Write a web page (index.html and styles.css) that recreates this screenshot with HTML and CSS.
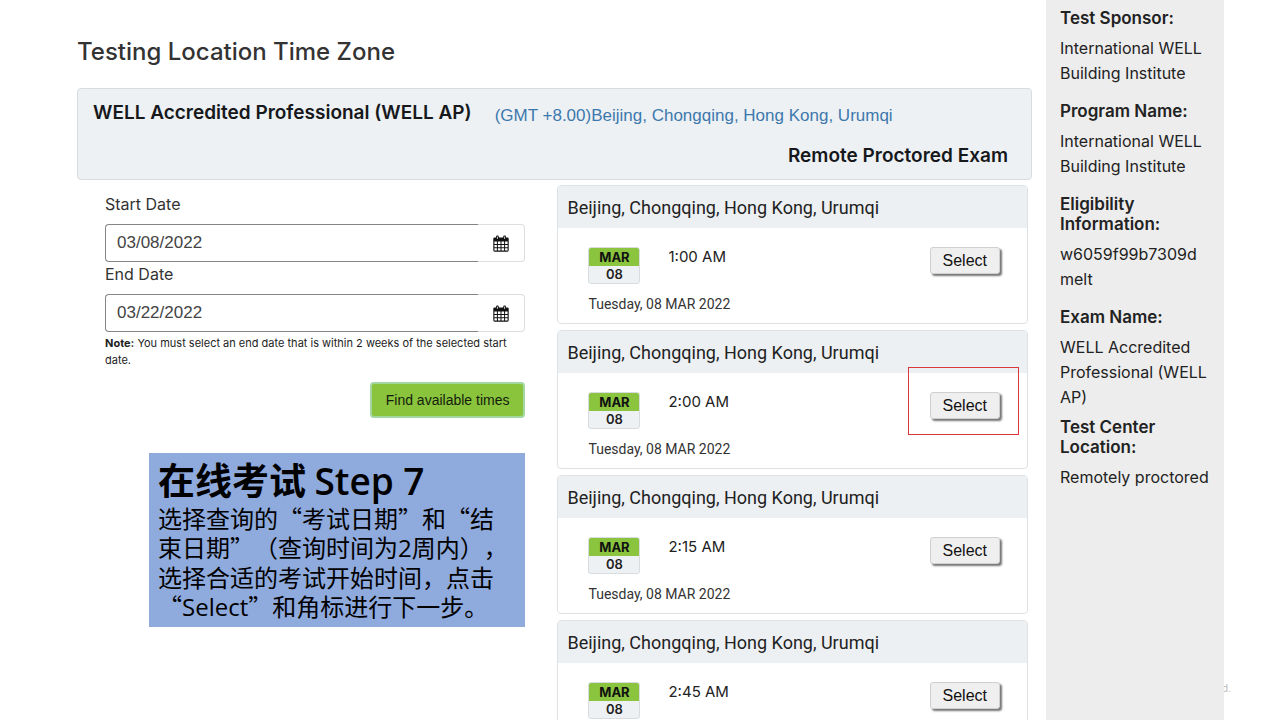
FILE: index.html
```html
<!DOCTYPE html>
<html lang="en">
<head>
<meta charset="utf-8">
<meta name="viewport" content="width=device-width, initial-scale=1">
<title>Testing Location Time Zone</title>
<link rel="stylesheet" href="styles.css">
</head>
<body>
<div class="page">
  <main class="main">
    <h1 class="title">Testing Location Time Zone</h1>
    <section class="exam">
      <div class="exam-row">
        <h2 class="exam-name">WELL Accredited Professional (WELL AP)</h2>
        <a class="zone" href="#">(GMT +8.00)Beijing, Chongqing, Hong Kong, Urumqi</a>
      </div>
      <h2 class="exam-type">Remote Proctored Exam</h2>
    </section>
    <div class="columns">
      <div class="search">
        <form class="form">
          <label class="label" for="start">Start Date</label>
          <div class="date">
            <input class="date-input" id="start" type="text" value="03/08/2022">
            <button class="date-button" type="button" aria-label="Pick start date">
              <svg class="calendar" viewBox="0 0 16 17"><path d="M1.5 2.5h13a1.2 1.2 0 0 1 1.2 1.2v11.6a1.4 1.4 0 0 1-1.4 1.4H1.7a1.4 1.4 0 0 1-1.4-1.4V3.7a1.2 1.2 0 0 1 1.2-1.2z" fill="#111"/><path d="M1.4 6.6h2.5v2.3H1.4zM4.9 6.6h2.6v2.3H4.9zM8.5 6.6h2.6v2.3H8.5zM12.1 6.6h2.5v2.3h-2.5zM1.4 9.9h2.5v2.4H1.4zM4.9 9.9h2.6v2.4H4.9zM8.5 9.9h2.6v2.4H8.5zM12.1 9.9h2.5v2.4h-2.5zM1.4 13.3h2.5v2.3H1.4zM4.9 13.3h2.6v2.3H4.9zM8.5 13.3h2.6v2.3H8.5zM12.1 13.3h2.5v2.3h-2.5z" fill="#fff"/><rect x="3" y=".5" width="2.8" height="4.4" rx="1.2" fill="#111"/><rect x="10.2" y=".5" width="2.8" height="4.4" rx="1.2" fill="#111"/><path d="M4.4 1.6v2.3M11.6 1.6v2.3" stroke="#fff" stroke-width=".8"/></svg>
            </button>
          </div>
          <label class="label label-next" for="end">End Date</label>
          <div class="date">
            <input class="date-input" id="end" type="text" value="03/22/2022">
            <button class="date-button" type="button" aria-label="Pick end date">
              <svg class="calendar" viewBox="0 0 16 17"><path d="M1.5 2.5h13a1.2 1.2 0 0 1 1.2 1.2v11.6a1.4 1.4 0 0 1-1.4 1.4H1.7a1.4 1.4 0 0 1-1.4-1.4V3.7a1.2 1.2 0 0 1 1.2-1.2z" fill="#111"/><path d="M1.4 6.6h2.5v2.3H1.4zM4.9 6.6h2.6v2.3H4.9zM8.5 6.6h2.6v2.3H8.5zM12.1 6.6h2.5v2.3h-2.5zM1.4 9.9h2.5v2.4H1.4zM4.9 9.9h2.6v2.4H4.9zM8.5 9.9h2.6v2.4H8.5zM12.1 9.9h2.5v2.4h-2.5zM1.4 13.3h2.5v2.3H1.4zM4.9 13.3h2.6v2.3H4.9zM8.5 13.3h2.6v2.3H8.5zM12.1 13.3h2.5v2.3h-2.5z" fill="#fff"/><rect x="3" y=".5" width="2.8" height="4.4" rx="1.2" fill="#111"/><rect x="10.2" y=".5" width="2.8" height="4.4" rx="1.2" fill="#111"/><path d="M4.4 1.6v2.3M11.6 1.6v2.3" stroke="#fff" stroke-width=".8"/></svg>
            </button>
          </div>
          <p class="note"><b>Note:</b> You must select an end date that is within 2 weeks of the selected start date.</p>
          <button class="find" type="button">Find available times</button>
        </form>
        <section class="callout" lang="zh-CN">
          <h2 class="callout-title">在线考试 <span class="callout-step">Step 7</span></h2>
          <p class="callout-text">选择查询的“考试日期”和“结<br>束日期”（查询时间为<span class="latin">2</span>周内），<br>选择合适的考试开始时间，点击<br>“<span class="latin">Select</span>”和角标进行下一步。</p>
        </section>
      </div>
      <div class="slots">
        <article class="slot">
          <h3 class="slot-head">Beijing, Chongqing, Hong Kong, Urumqi</h3>
          <div class="slot-body">
            <div class="slot-row">
              <div class="badge"><span class="month">MAR</span><span class="day">08</span></div>
              <span class="time">1:00 AM</span>
              <span class="pick"><button class="select" type="button">Select</button></span>
            </div>
            <p class="slot-date">Tuesday, 08 MAR 2022</p>
          </div>
        </article>
        <article class="slot">
          <h3 class="slot-head">Beijing, Chongqing, Hong Kong, Urumqi</h3>
          <div class="slot-body">
            <div class="slot-row">
              <div class="badge"><span class="month">MAR</span><span class="day">08</span></div>
              <span class="time">2:00 AM</span>
              <span class="pick marked"><button class="select" type="button">Select</button></span>
            </div>
            <p class="slot-date">Tuesday, 08 MAR 2022</p>
          </div>
        </article>
        <article class="slot">
          <h3 class="slot-head">Beijing, Chongqing, Hong Kong, Urumqi</h3>
          <div class="slot-body">
            <div class="slot-row">
              <div class="badge"><span class="month">MAR</span><span class="day">08</span></div>
              <span class="time">2:15 AM</span>
              <span class="pick"><button class="select" type="button">Select</button></span>
            </div>
            <p class="slot-date">Tuesday, 08 MAR 2022</p>
          </div>
        </article>
        <article class="slot">
          <h3 class="slot-head">Beijing, Chongqing, Hong Kong, Urumqi</h3>
          <div class="slot-body">
            <div class="slot-row">
              <div class="badge"><span class="month">MAR</span><span class="day">08</span></div>
              <span class="time">2:45 AM</span>
              <span class="pick"><button class="select" type="button">Select</button></span>
            </div>
          </div>
        </article>
      </div>
    </div>
  </main>
  <aside class="side">
    <h4 class="side-head">Test Sponsor:</h4>
    <p class="side-text">International WELL Building Institute</p>
    <h4 class="side-head">Program Name:</h4>
    <p class="side-text">International WELL Building Institute</p>
    <h4 class="side-head">Eligibility Information:</h4>
    <p class="side-text">w6059f99b7309d<wbr>melt</p>
    <h4 class="side-head">Exam Name:</h4>
    <p class="side-text side-text-tight">WELL Accredited Professional (WELL AP)</p>
    <h4 class="side-head">Test Center Location:</h4>
    <p class="side-text">Remotely proctored</p>
  </aside>
  <small class="footnote">d.</small>
</div>
</body>
</html>
```
FILE: styles.css
```css
* {
  box-sizing: border-box;
}

body,
h1,
h2,
h3,
h4,
p {
  margin: 0;
}

body {
  background: #fff;
  color: #222;
  font-family: Inter, "Liberation Sans", sans-serif;
  font-size: 16px;
}

button,
input {
  font-family: inherit;
}

.page {
  display: flex;
  height: 100vh;
  overflow: hidden;
  padding-left: 77px;
}

.main {
  flex: 1;
  min-width: 0;
}

.title {
  margin-top: 36px;
  font-size: 24px;
  font-weight: 500;
  line-height: 32px;
  color: #333;
}

.exam {
  min-height: 92px;
  margin-top: 20px;
  padding: 12px 23px 0 15px;
  background: #edf1f4;
  border: 1px solid #d8dce0;
  border-radius: 4px;
}

.exam-row {
  display: flex;
  align-items: flex-start;
  gap: 23px;
}

.exam-name,
.exam-type {
  font-size: 19px;
  font-weight: 600;
  line-height: 24px;
  color: #16181b;
  white-space: nowrap;
}

.exam-type {
  margin-top: 16px;
  text-align: right;
}

.zone {
  padding-top: 3px;
  font-family: "Liberation Sans", sans-serif;
  font-size: 17px;
  line-height: 24px;
  color: #3d78ad;
  text-decoration: none;
  white-space: nowrap;
}

.columns {
  display: flex;
  gap: 32px;
  padding: 5px 4px 0 28px;
}

.search {
  flex: 42;
  min-width: 0;
}

.slots {
  display: flex;
  flex: 47;
  flex-direction: column;
  gap: 6px;
  min-width: 0;
}

.label {
  display: block;
  padding-top: 7px;
  font-size: 16px;
  line-height: 25px;
  color: #333;
}

.form {
  display: flex;
  flex-direction: column;
}

.date {
  display: flex;
  height: 38px;
  margin-top: 7px;
}

.label-next {
  padding-top: 0;
}

.date-input {
  flex: 1;
  min-width: 0;
  padding: 0 11px;
  border: 1px solid #858585;
  border-right: 0;
  border-radius: 4px 0 0 4px;
  background: #fff;
  color: #444;
  font-family: "Liberation Sans", sans-serif;
  font-size: 17px;
}

.date-button {
  display: flex;
  align-items: center;
  justify-content: center;
  width: 47px;
  padding: 0;
  border: 1px solid #ddd;
  border-left: 0;
  border-radius: 0 4px 4px 0;
  background: #fff;
}

.calendar {
  width: 16px;
  height: 17px;
}

.note {
  margin-top: 3px;
  font-size: 11px;
  line-height: 17px;
  color: #222;
}

.find {
  align-self: flex-end;
  height: 36px;
  margin-top: 13px;
  padding: 0 14px;
  border: 2px solid #a3d6a0;
  border-radius: 4px;
  background: #8ac43c;
  color: #141c0c;
  font-family: "Liberation Sans", sans-serif;
  font-size: 14px;
}

.callout {
  margin: 35px 0 0 44px;
  padding: 4px 8px 6px 9px;
  background: #8faadc;
  color: #000;
  font-family: "Noto Sans CJK SC", sans-serif;
  text-spacing-trim: space-all;
}

.callout-title {
  font-size: 37px;
  font-weight: 700;
  line-height: 45px;
}

.callout-step {
  font-family: "Open Sans", sans-serif;
  font-weight: 600;
}

.callout-text {
  font-size: 24px;
  line-height: 29px;
  white-space: nowrap;
}

.latin {
  font-family: "Open Sans", sans-serif;
}

.slot {
  min-height: 139px;
  flex: none;
  border: 1px solid #dfe2e5;
  border-radius: 4px;
  background: #fff;
}

.slot-head {
  padding: 1px 9px 0;
  background: #edf0f3;
  font-family: Roboto, sans-serif;
  font-size: 18px;
  font-weight: 400;
  line-height: 41px;
  color: #222;
}

.slot-body {
  padding: 19px 27px 0 30px;
}

.slot-row {
  display: flex;
  align-items: flex-start;
}

.badge {
  display: flex;
  flex-direction: column;
  width: 52px;
  border: 1px solid #d8dcdf;
  border-radius: 3px;
  background: #eef1f4;
  font-size: 13px;
  line-height: 18px;
  text-align: center;
  overflow: hidden;
}

.month {
  background: #8bc53f;
  color: #111;
  font-weight: 700;
}

.day {
  font-weight: 600;
  line-height: 17px;
}

.time {
  margin-left: 28px;
  font-size: 15px;
  line-height: 20px;
}

.pick {
  position: relative;
  margin-left: auto;
}

.marked::after {
  content: "";
  position: absolute;
  inset: -25px -19px -16px -22px;
  border: 1px solid #d8373c;
  pointer-events: none;
}

.select {
  display: block;
  height: 27px;
  padding: 0 12px;
  border: 1px solid #d0d0d0;
  border-radius: 3px;
  background: #efefef;
  box-shadow: 2px 2px 2px #777;
  color: #111;
  font-family: "Liberation Sans", sans-serif;
  font-size: 16px;
}

.slot-date {
  margin-top: 10px;
  font-family: Roboto, sans-serif;
  font-size: 14px;
  line-height: 20px;
  color: #333;
}

.side {
  position: relative;
  z-index: 1;
  width: 178px;
  margin-left: 14px;
  margin-right: 56px;
  padding: 8px 14px;
  background: #ededed;
}

.side-head {
  font-size: 17px;
  font-weight: 600;
  line-height: 20px;
}

.side-text {
  margin: 8px 0 15px;
  font-size: 16px;
  line-height: 25px;
}

.side-text-tight {
  margin-bottom: 7px;
}

.footnote {
  position: absolute;
  right: 49px;
  bottom: 26px;
  font-size: 10px;
  color: #bbb;
}
```
